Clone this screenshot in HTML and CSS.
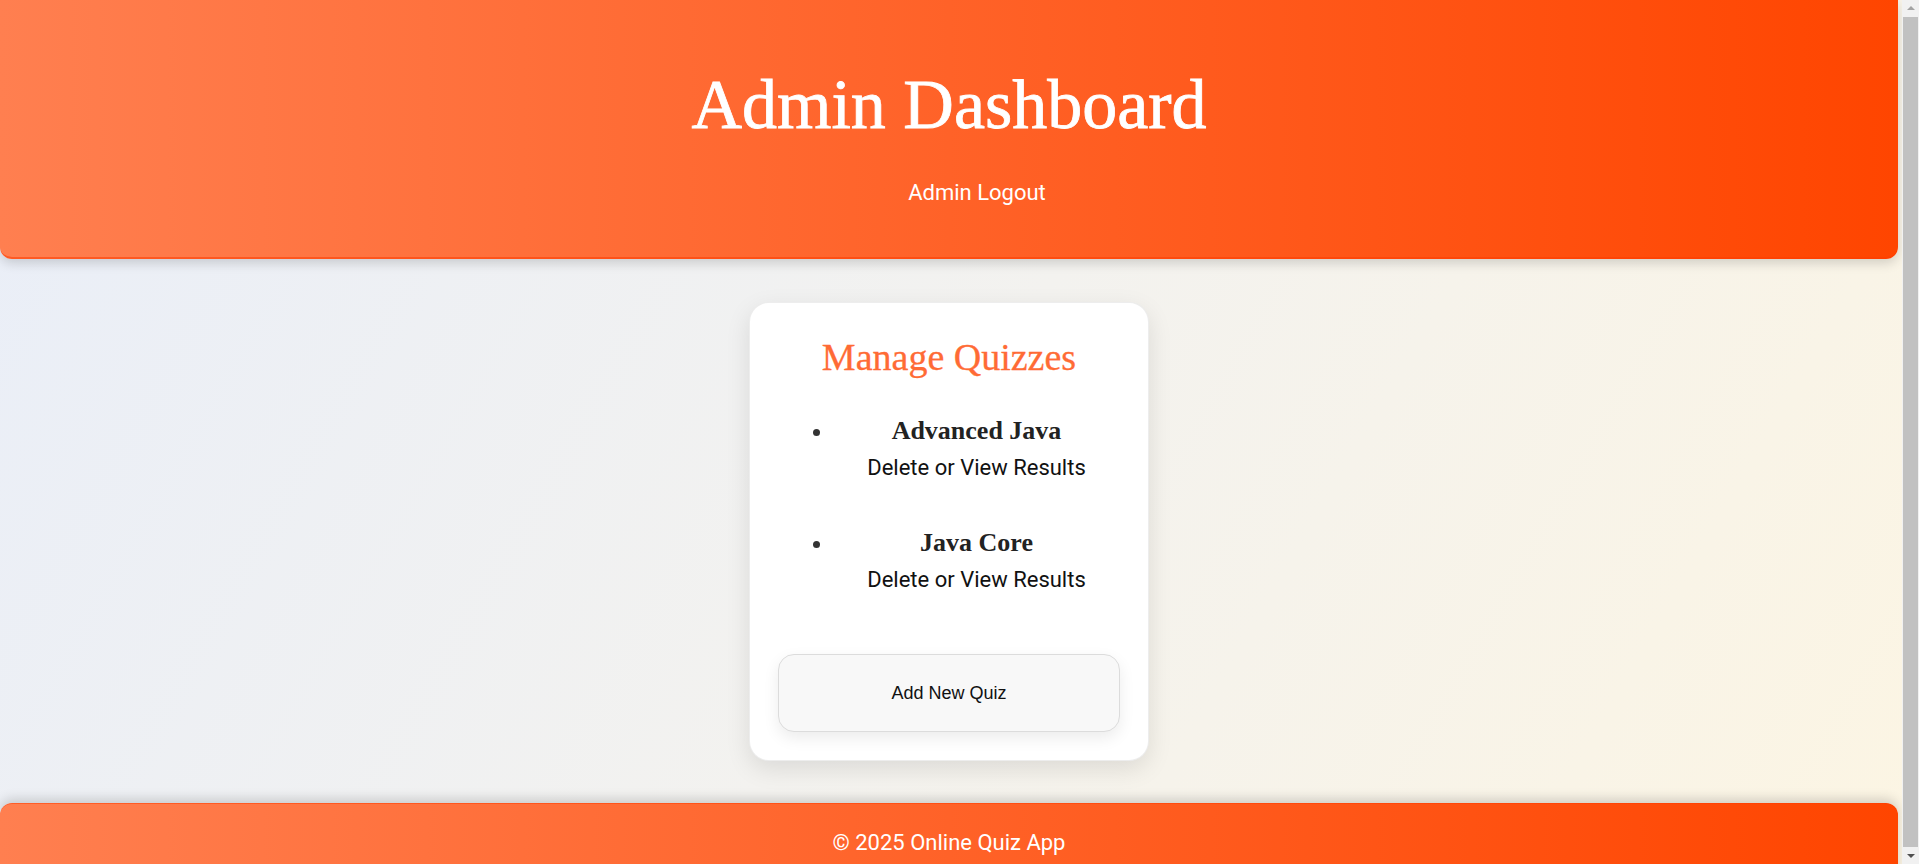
FILE: index.html
```html
<!DOCTYPE html>
<html lang="en">
<head>
<meta charset="utf-8">
<title>Admin Dashboard</title>
<link rel="stylesheet" href="styles.css">
</head>
<body>
<div class="page">
  <header class="site-header">
    <h1 class="site-title">Admin Dashboard</h1>
    <ul class="site-nav">
      <li class="nav-item"><a class="nav-link" href="#">Admin Logout</a></li>
    </ul>
  </header>
  <main class="main">
    <section class="card">
      <h2 class="card-title">Manage Quizzes</h2>
      <ul class="quiz-list">
        <li class="quiz-item">
          <h3 class="quiz-name">Advanced Java</h3>
          <div class="quiz-actions"><a class="action" href="#">Delete</a> or <a class="action" href="#">View Results</a></div>
        </li>
        <li class="quiz-item">
          <h3 class="quiz-name">Java Core</h3>
          <div class="quiz-actions"><a class="action" href="#">Delete</a> or <a class="action" href="#">View Results</a></div>
        </li>
      </ul>
      <button class="add-btn" type="button">Add New Quiz</button>
    </section>
  </main>
  <footer class="site-footer">© 2025 Online Quiz App</footer>
</div>
<div class="scrollbar" aria-hidden="true">
  <div class="scroll-arrow scroll-up"></div>
  <div class="scroll-thumb"></div>
  <div class="scroll-arrow scroll-down"></div>
</div>
</body>
</html>
```
FILE: styles.css
```css
html, body {
  margin: 0;
  padding: 0;
}
body {
  font-family: Roboto, "Liberation Sans", Arial, sans-serif;
  background: linear-gradient(120deg, #e9eef8 0%, #f3f2ef 50%, #fcf5e3 100%);
  min-height: 100vh;
  color: #111;
}
.page {
  margin-right: 21px;
}
.site-header {
  background: linear-gradient(to right, #ff7f50, #ff4500);
  text-align: center;
  padding: 65px 0 52px;
  border-bottom: 2px solid rgba(255, 60, 0, 0.55);
  border-radius: 0 0 12px 12px;
  box-shadow: 0 4px 12px rgba(0, 0, 0, 0.16);
  position: relative;
  z-index: 1;
}
.site-title {
  margin: 0;
  font-family: "Liberation Serif", "Times New Roman", serif;
  font-weight: normal;
  font-size: 70px;
  line-height: normal;
  color: #fff;
  -webkit-text-stroke: 0.8px #fff;
}
.site-nav {
  margin: 35px 0 0;
  padding-left: 56px;
  list-style: none;
}
.nav-item {
  font-size: 22px;
  line-height: normal;
}
.nav-link {
  color: #fff;
  text-decoration: none;
}
.main {
  padding: 43px 0 42px;
  display: flex;
  justify-content: center;
}
.card {
  width: 400px;
  box-sizing: border-box;
  background: #fff;
  border: 1px solid rgba(0, 0, 0, 0.07);
  border-radius: 20px;
  padding: 28px;
  box-shadow: 0 8px 24px rgba(0, 0, 0, 0.1);
  text-align: center;
}
.card-title {
  margin: 4px 0 0;
  font-family: "Liberation Serif", "Times New Roman", serif;
  font-weight: normal;
  font-size: 38px;
  line-height: normal;
  color: #ff6b35;
  -webkit-text-stroke: 0.3px #ff6b35;
}
.quiz-list {
  margin: 37px 0 0;
  padding: 0 0 14px 55px;
  font-size: 22px;
  color: #333;
}
.quiz-item {
  margin-bottom: 48px;
}
.quiz-name {
  margin: 0 0 9px;
  font-family: "Liberation Serif", "Times New Roman", serif;
  font-weight: bold;
  font-size: 26px;
  line-height: normal;
  color: #222;
}
.quiz-actions {
  font-size: 22px;
  line-height: normal;
  color: #111;
}
.action {
  color: #111;
  text-decoration: none;
}
.add-btn {
  display: block;
  width: 100%;
  box-sizing: border-box;
  font-family: "Liberation Sans", Arial, sans-serif;
  font-size: 18px;
  line-height: 20px;
  padding: 28px 0;
  color: #111;
  background: #f8f8f8;
  border: 1px solid #dcdcdc;
  border-radius: 16px;
  box-shadow: 0 6px 16px rgba(0, 0, 0, 0.08);
}
.site-footer {
  background: linear-gradient(to right, #ff7f50, #ff4500);
  color: #fff;
  text-align: center;
  font-size: 22px;
  line-height: 37px;
  padding: 20px 0;
  border-top: 1px solid rgba(255, 60, 0, 0.5);
  border-radius: 12px 12px 0 0;
  box-shadow: 0 -4px 12px rgba(0, 0, 0, 0.16);
}
.scrollbar {
  position: fixed;
  top: 0;
  right: 0;
  bottom: 0;
  width: 17px;
  background: #f1f1f1;
  display: flex;
  flex-direction: column;
  align-items: center;
  z-index: 10;
}
.scroll-arrow {
  width: 0;
  height: 0;
  margin: 5px 0;
  border-left: 4px solid transparent;
  border-right: 4px solid transparent;
}
.scroll-up {
  border-bottom: 4px solid #a3a3a3;
  margin-top: 6px;
}
.scroll-down {
  border-top: 4px solid #505050;
  margin-bottom: 6px;
}
.scroll-thumb {
  flex: 1;
  width: 15px;
  margin: 2px 0;
  background: #c1c1c1;
}
```
